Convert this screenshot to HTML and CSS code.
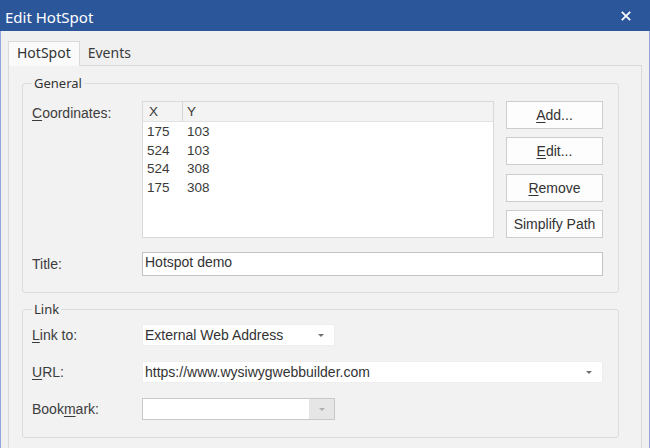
FILE: index.html
```html
<!DOCTYPE html>
<html>
<head>
<meta charset="utf-8">
<title>Edit HotSpot</title>
<link rel="stylesheet" href="styles.css">
</head>
<body>
<div class="titlebar">
  <span class="title">Edit HotSpot</span>
  <svg class="close" width="10" height="10" viewBox="0 0 10 10"><path d="M0.8 0.8 L9.2 9.2 M9.2 0.8 L0.8 9.2" stroke="#fff" stroke-width="1.7" fill="none"/></svg>
</div>
<div class="frame">
  <div class="tabs">
    <div class="tab active">HotSpot</div>
    <div class="tab">Events</div>
  </div>
  <div class="panel">
    <fieldset class="group">
      <legend>General</legend>
      <div class="grid-general">
        <div class="label top"><u>C</u>oordinates:</div>
        <div class="listbox">
          <div class="lb-head"><span class="c1">X</span><span class="c2">Y</span></div>
          <div class="lb-rows">
            <div class="lb-row"><span class="c1">175</span><span class="c2">103</span></div>
            <div class="lb-row"><span class="c1">524</span><span class="c2">103</span></div>
            <div class="lb-row"><span class="c1">524</span><span class="c2">308</span></div>
            <div class="lb-row"><span class="c1">175</span><span class="c2">308</span></div>
          </div>
        </div>
        <div class="buttons">
          <div class="btn"><span><u>A</u>dd...</span></div>
          <div class="btn"><span><u>E</u>dit...</span></div>
          <div class="btn"><span><u>R</u>emove</span></div>
          <div class="btn"><span>Simplify Path</span></div>
        </div>
        <div class="label mid">Title:</div>
        <div class="input wide">Hotspot demo</div>
      </div>
    </fieldset>
    <fieldset class="group link">
      <legend>Link</legend>
      <div class="grid-link">
        <div class="label mid"><u>L</u>ink to:</div>
        <div class="select short"><span>External Web Address</span><i class="arrow"></i></div>
        <div class="label mid"><u>U</u>RL:</div>
        <div class="select long"><span>https://www.wysiwygwebbuilder.com</span><i class="arrow"></i></div>
        <div class="label mid">Book<u>m</u>ark:</div>
        <div class="select short disabled"><span></span><span class="drop"><i class="arrow"></i></span></div>
      </div>
    </fieldset>
  </div>
</div>
</body>
</html>
```
FILE: styles.css
```css
html, body {
  margin: 0;
  padding: 0;
}
body {
  width: 650px;
  height: 448px;
  overflow: hidden;
  background: #f0f0f0;
  font-family: "Liberation Sans", Arial, sans-serif;
  font-size: 14px;
  color: #3a3a3a;
}
.titlebar {
  height: 31px;
  box-sizing: border-box;
  background: #2b579a;
  display: flex;
  align-items: center;
  justify-content: space-between;
  padding: 2px 19px 0 5px;
  color: #fff;
  font-family: "Noto Sans", sans-serif;
  font-size: 15px;
}
.close {
  display: block;
  margin-top: -2px;
}
.frame {
  height: 417px;
  box-sizing: border-box;
  border-left: 1px solid #93a5dc;
  border-right: 1px solid #93a5dc;
  padding: 10px 7px 0 7px;
  overflow: hidden;
}
.tabs {
  display: flex;
  height: 24px;
}
.tab {
  height: 24px;
  box-sizing: border-box;
  padding: 1px 8px 0 8px;
  line-height: 22px;
  font-family: "Noto Sans", sans-serif;
  font-size: 14px;
  color: #3a3a3a;
}
.tab.active {
  position: relative;
  z-index: 1;
  height: 25px;
  padding: 0 8px 0 8px;
  border: 1px solid #d9d9d9;
  border-bottom: none;
  background: #fafafa;
  margin-bottom: -1px;
  color: #333;
}
.panel {
  height: 420px;
  box-sizing: border-box;
  border: 1px solid #d9d9d9;
  background: #f2f2f2;
  padding: 8px 0 0 13px;
}
fieldset.group {
  margin: 0;
  width: 571px;
  padding: 9px 15px 16px 9px;
  border: 1px solid #dcdcdc;
  border-radius: 3px;
}
fieldset.group.link {
  margin-top: 7px;
  padding-top: 6px;
  padding-bottom: 17px;
}
legend {
  padding: 0 2px;
  font-family: "Noto Sans", sans-serif;
  font-size: 13px;
  line-height: 18px;
  color: #333;
}
.grid-general {
  display: grid;
  grid-template-columns: 110px 364px 97px;
  row-gap: 14px;
}
.grid-link {
  display: grid;
  grid-template-columns: 110px 461px;
  grid-auto-rows: 22px;
  row-gap: 15px;
}
.label {
  color: #3c3c3c;
  line-height: 18px;
}
.label.top {
  padding-top: 3px;
}
.label.mid {
  align-self: center;
}
u {
  text-decoration-thickness: 1px;
  text-underline-offset: 2px;
}
.listbox {
  width: 352px;
  height: 137px;
  box-sizing: border-box;
  border: 1px solid #d9d9d9;
  background: #fff;
  font-size: 13.5px;
}
.lb-head {
  display: flex;
  height: 20px;
  box-sizing: border-box;
  background: #f3f3f3;
  border-bottom: 1px solid #e2e2e2;
  line-height: 19px;
}
.lb-head .c1 {
  width: 40px;
  box-sizing: border-box;
  padding-left: 6px;
  border-right: 1px solid #d6d6d6;
}
.lb-head .c2 {
  padding-left: 4px;
}
.lb-rows {
  padding-top: 1px;
}
.lb-row {
  display: flex;
  height: 18.67px;
  line-height: 18.67px;
}
.lb-row .c1 {
  width: 40px;
  box-sizing: border-box;
  padding-left: 4px;
}
.lb-row .c2 {
  padding-left: 4px;
}
.buttons {
  display: flex;
  flex-direction: column;
  justify-content: space-between;
  height: 137px;
}
.btn {
  height: 28px;
  box-sizing: border-box;
  border: 1px solid #cdcdcd;
  background: #fdfdfd;
  display: flex;
  align-items: center;
  justify-content: center;
  color: #333;
}
.input {
  height: 24px;
  box-sizing: border-box;
  border: 1px solid #c2c2c2;
  background: #fff;
  padding-left: 2px;
  line-height: 18px;
  color: #333;
}
.wide {
  grid-column: 2 / span 2;
}
.select {
  height: 22px;
  box-sizing: border-box;
  background: #fff;
  border: 1px solid #eeeeee;
  display: flex;
  align-items: center;
  justify-content: space-between;
  padding-left: 2px;
  color: #333;
}
.select.short {
  width: 193px;
}
.select.long {
  width: 461px;
}
.arrow {
  display: block;
  width: 0;
  height: 0;
  border-left: 3px solid transparent;
  border-right: 3px solid transparent;
  border-top: 3px solid #707070;
  margin-right: 10px;
}
.select.disabled {
  border: 1px solid #c9c9c9;
  padding-left: 0;
}
.drop {
  width: 25px;
  height: 20px;
  background: #e6e6e6;
  display: flex;
  align-items: center;
  justify-content: center;
}
.drop .arrow {
  margin-right: 0;
  border-top-color: #b0b0b0;
}
```
